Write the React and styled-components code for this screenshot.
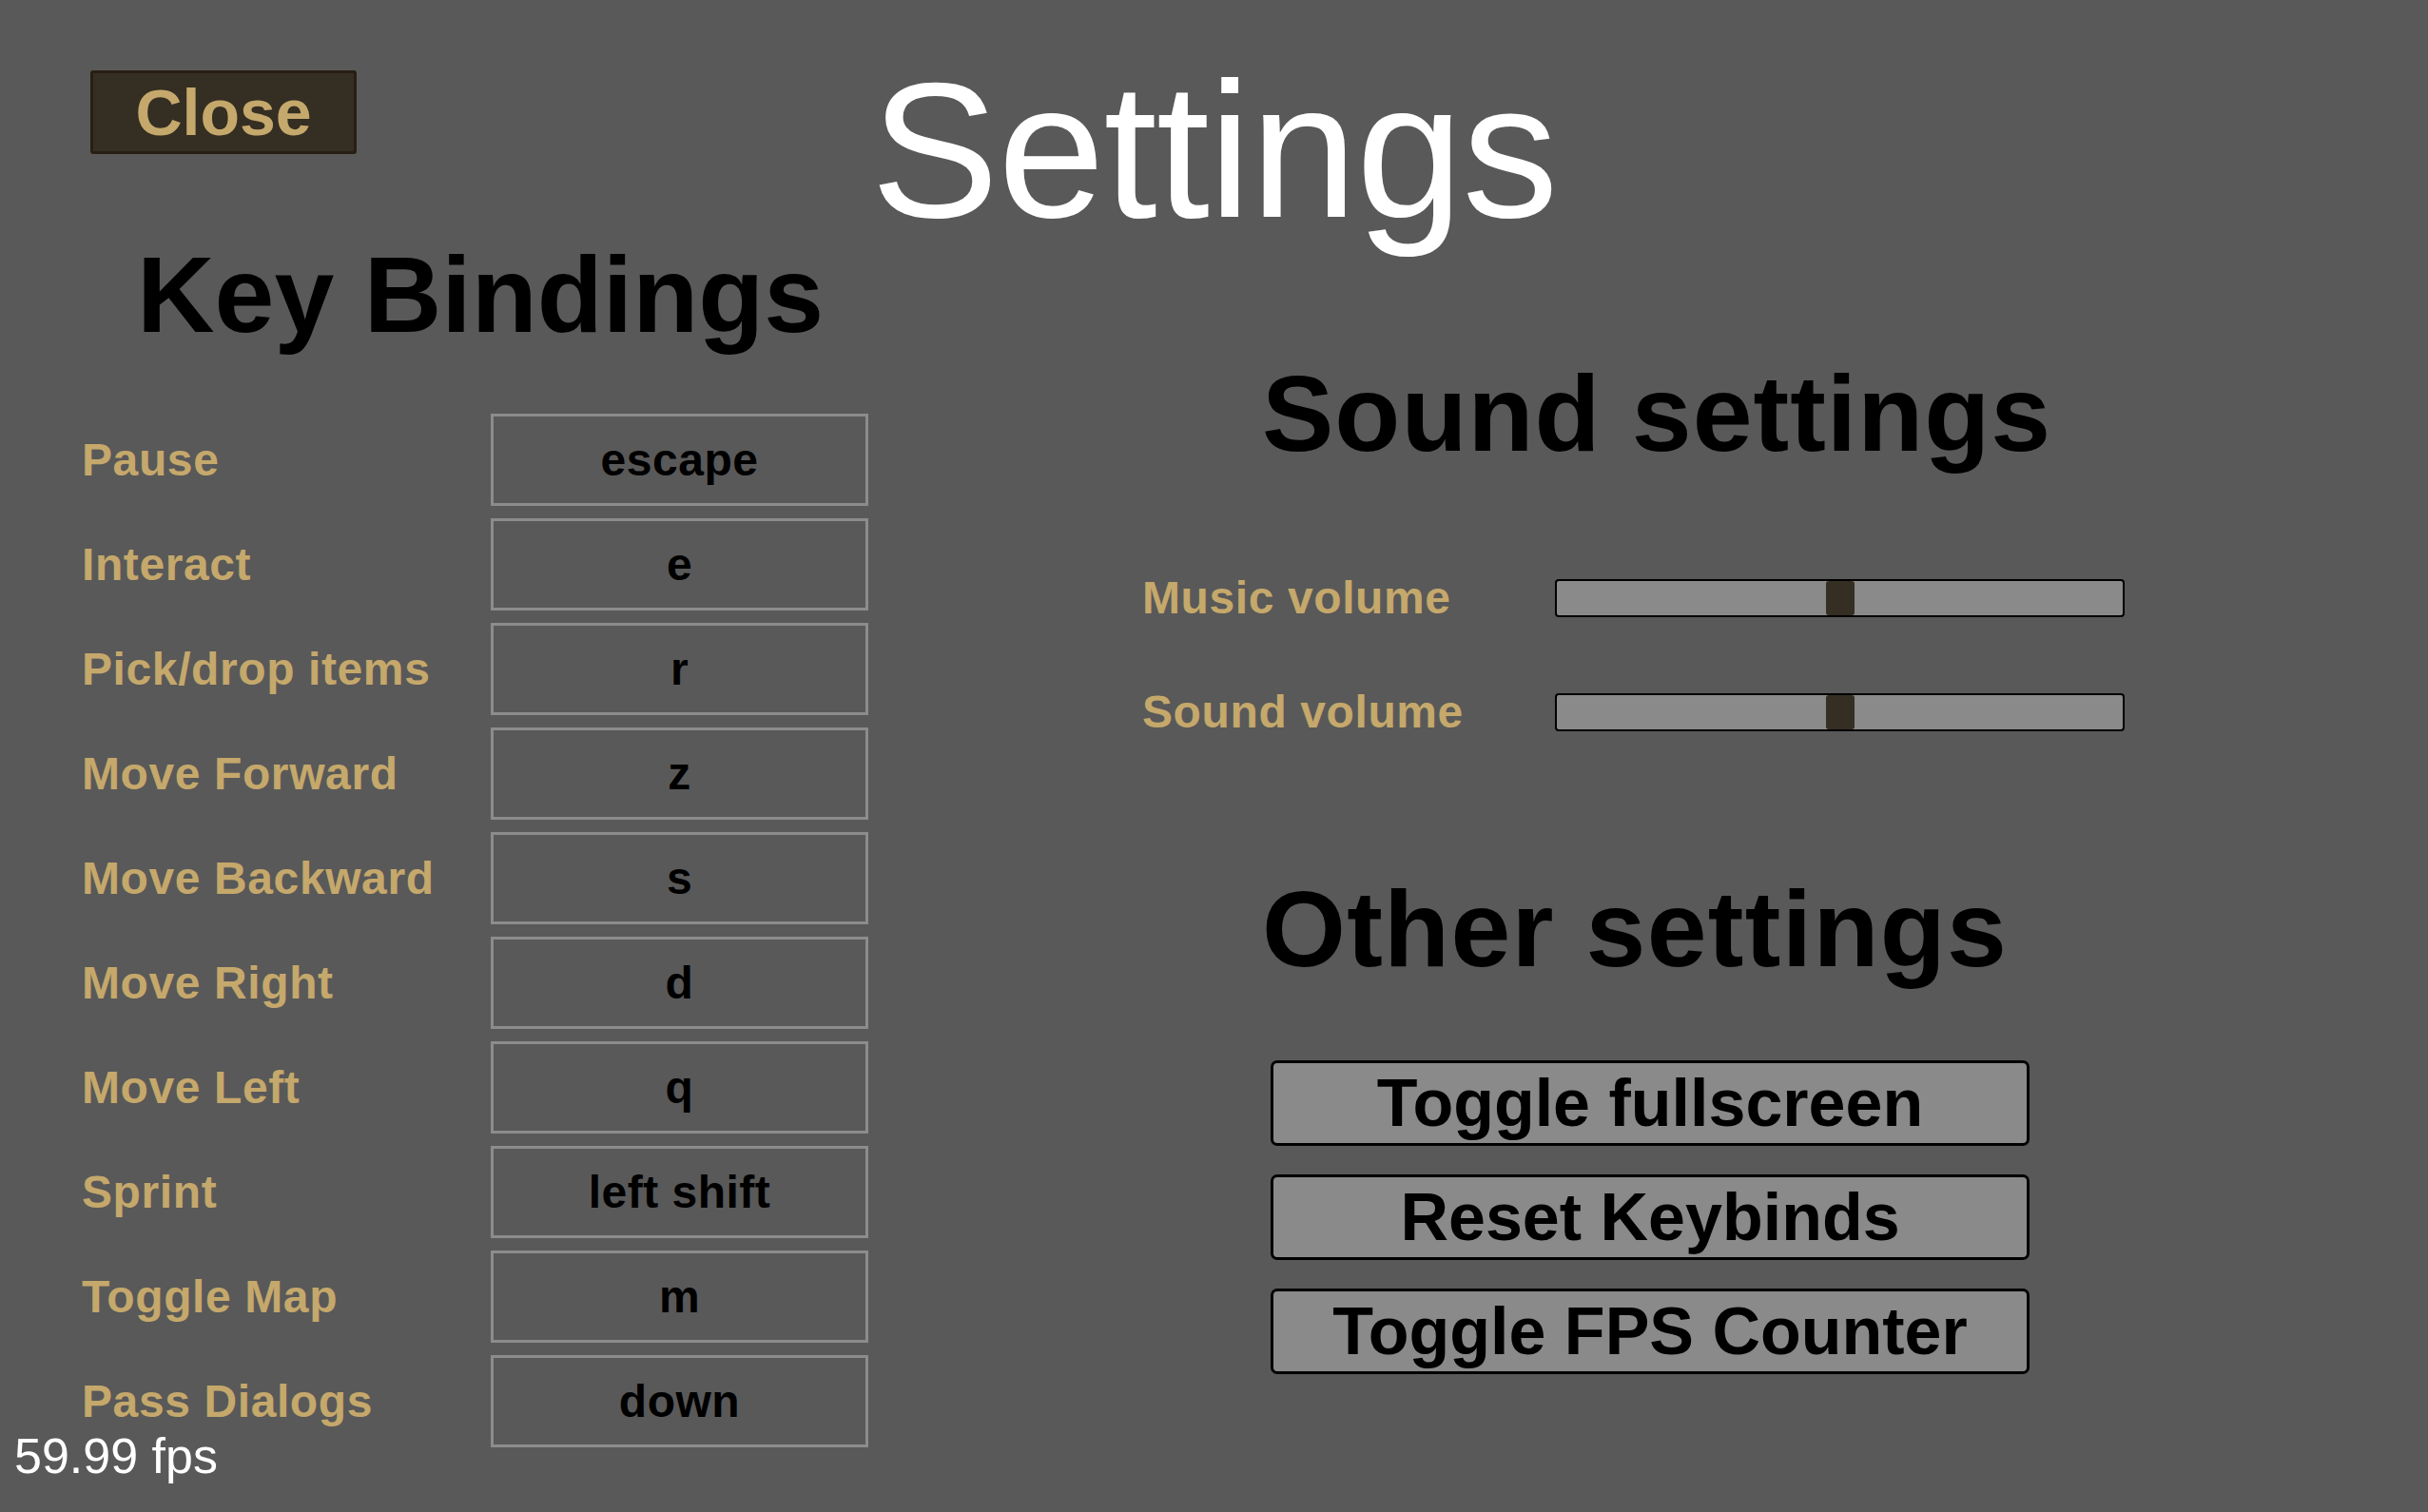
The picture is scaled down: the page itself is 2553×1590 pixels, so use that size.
import React from "react";
import styled, { createGlobalStyle } from "styled-components";

const GlobalStyle = createGlobalStyle`
  html, body {
    margin: 0;
    padding: 0;
    background: #595959;
  }
  * {
    box-sizing: border-box;
  }
`;

const keyBindings = [
  { action: "Pause", key: "escape" },
  { action: "Interact", key: "e" },
  { action: "Pick/drop items", key: "r" },
  { action: "Move Forward", key: "z" },
  { action: "Move Backward", key: "s" },
  { action: "Move Right", key: "d" },
  { action: "Move Left", key: "q" },
  { action: "Sprint", key: "left shift" },
  { action: "Toggle Map", key: "m" },
  { action: "Pass Dialogs", key: "down" },
];

const volumes = [
  { label: "Music volume", value: 0.5 },
  { label: "Sound volume", value: 0.5 },
];

const actions = ["Toggle fullscreen", "Reset Keybinds", "Toggle FPS Counter"];

const Settings = () => {
  return (
    <>
      <GlobalStyle />
      <Screen>
        <Header>
          <CloseButton>Close</CloseButton>
          <Title>Settings</Title>
        </Header>

        <Body>
          <LeftColumn>
            <SectionTitle $indent={58}>Key Bindings</SectionTitle>
            <BindingList>
              {keyBindings.map((b) => (
                <BindingRow key={b.action}>
                  <GoldLabel>{b.action}</GoldLabel>
                  <KeyBox>{b.key}</KeyBox>
                </BindingRow>
              ))}
            </BindingList>
          </LeftColumn>

          <RightColumn>
            <SectionTitle $indent={126} $top={131} $spacing={1}>
              Sound settings
            </SectionTitle>
            <SliderList>
              {volumes.map((v) => (
                <SliderRow key={v.label}>
                  <GoldLabel>{v.label}</GoldLabel>
                  <Track>
                    <Thumb style={{ left: `${v.value * 100}%` }} />
                  </Track>
                </SliderRow>
              ))}
            </SliderList>

            <SectionTitle $indent={126} $top={160} $spacing={1.3}>
              Other settings
            </SectionTitle>
            <ButtonList>
              {actions.map((a) => (
                <ActionButton key={a}>{a}</ActionButton>
              ))}
            </ButtonList>
          </RightColumn>
        </Body>

        <FpsCounter>59.99 fps</FpsCounter>
      </Screen>
    </>
  );
};

const Screen = styled.div`
  position: relative;
  width: 2553px;
  height: 1590px;
  overflow: hidden;
  background: #595959;
  font-family: "Liberation Sans", Arial, sans-serif;
`;

const Header = styled.div`
  display: grid;
  grid-template-columns: 1fr auto 1fr;
  align-items: start;
  padding: 68px 95px 0;
`;

const CloseButton = styled.button`
  justify-self: start;
  margin-top: 6px;
  width: 280px;
  height: 88px;
  padding: 0;
  background: #352e23;
  border: 3px solid #281f12;
  border-radius: 3px;
  color: #c5a86b;
  font-family: "Liberation Sans", Arial, sans-serif;
  font-weight: bold;
  font-size: 68px;
  line-height: 1;
  cursor: pointer;
`;

const Title = styled.h1`
  margin: 0;
  color: #ffffff;
  font-weight: normal;
  font-size: 202px;
  line-height: 180px;
  letter-spacing: -1px;
`;

const Body = styled.div`
  display: flex;
  align-items: flex-start;
  gap: 288px;
  padding-left: 86px;
`;

const LeftColumn = styled.div`
  display: flex;
  flex-direction: column;
  width: 827px;
`;

const RightColumn = styled.div`
  display: flex;
  flex-direction: column;
  width: 1040px;
`;

const SectionTitle = styled.h2`
  margin: ${(p) => p.$top || 6}px 0 0 ${(p) => p.$indent}px;
  color: #000000;
  font-weight: bold;
  font-size: 113px;
  line-height: 113px;
  letter-spacing: ${(p) => p.$spacing || 0}px;
`;

const BindingList = styled.div`
  display: flex;
  flex-direction: column;
  gap: 13px;
  margin-top: 68px;
`;

const BindingRow = styled.div`
  display: grid;
  grid-template-columns: 430px 397px;
  align-items: center;
  height: 97px;
`;

const GoldLabel = styled.span`
  color: #c5a86b;
  font-weight: bold;
  font-size: 48px;
  letter-spacing: 0.6px;
  white-space: nowrap;
`;

const KeyBox = styled.div`
  display: flex;
  align-items: center;
  justify-content: center;
  height: 97px;
  border: 3px solid #8c8c8c;
  color: #000000;
  font-weight: bold;
  font-size: 48px;
  letter-spacing: 0.5px;
`;

const SliderList = styled.div`
  display: flex;
  flex-direction: column;
  gap: 80px;
  margin-top: 109px;
`;

const SliderRow = styled.div`
  display: grid;
  grid-template-columns: 434px 599px;
  align-items: center;
  height: 40px;
`;

const Track = styled.div`
  position: relative;
  height: 40px;
  background: #8a8a8a;
  border: 2px solid #000000;
  border-radius: 4px;
`;

const Thumb = styled.div`
  position: absolute;
  top: 0;
  bottom: 0;
  width: 30px;
  transform: translateX(-50%);
  background: #352e23;
  border-radius: 3px;
`;

const ButtonList = styled.div`
  display: flex;
  flex-direction: column;
  gap: 30px;
  margin: 81px 0 0 135px;
`;

const ActionButton = styled.button`
  width: 798px;
  height: 90px;
  padding: 0;
  background: #8a8a8a;
  border: 3px solid #000000;
  border-radius: 7px;
  color: #000000;
  font-family: "Liberation Sans", Arial, sans-serif;
  font-weight: bold;
  font-size: 70px;
  line-height: 1;
  cursor: pointer;
`;

const FpsCounter = styled.div`
  position: absolute;
  left: 15px;
  top: 1506px;
  color: #ffffff;
  font-size: 52px;
  line-height: 50px;
`;

export default Settings;
